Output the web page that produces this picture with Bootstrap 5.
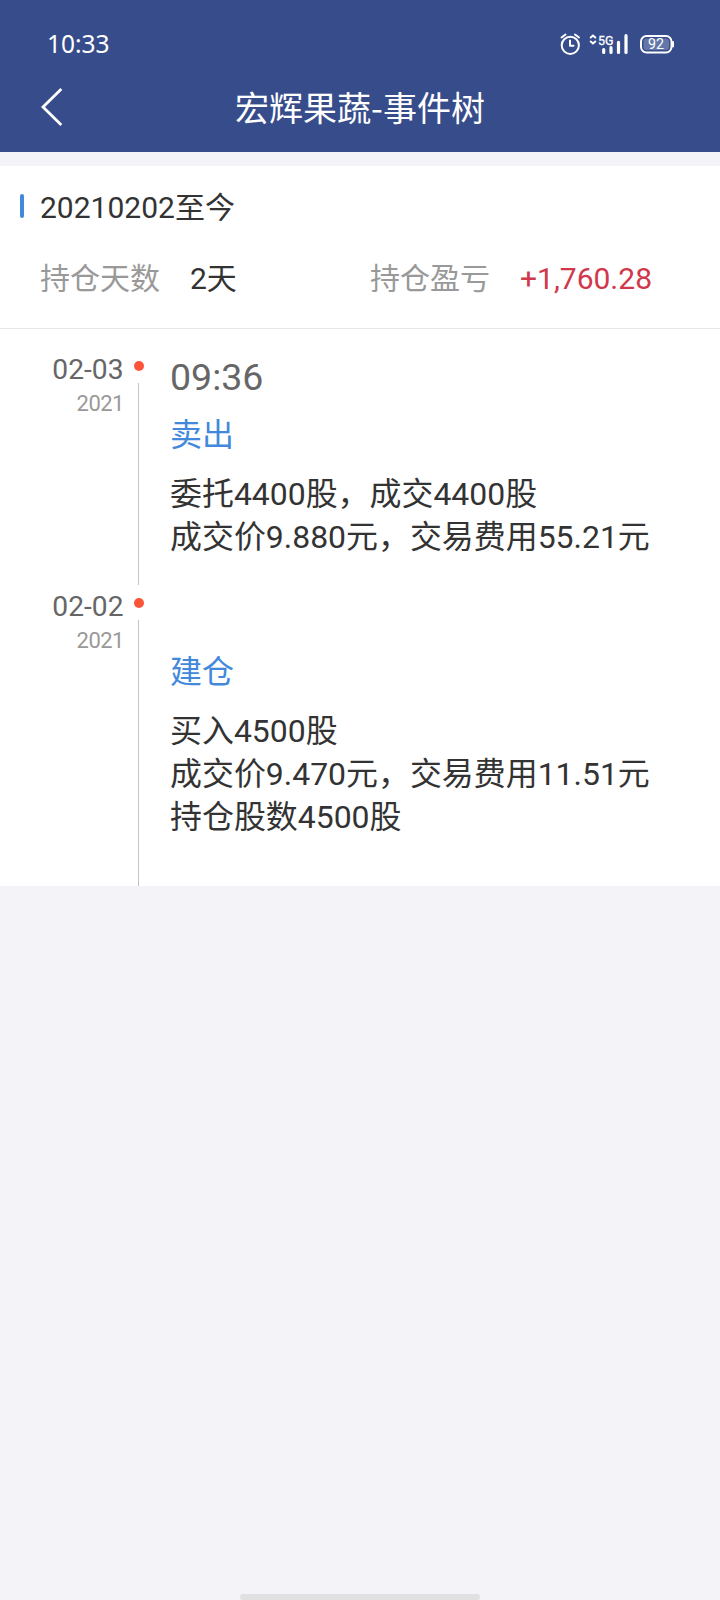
<!DOCTYPE html>
<html lang="zh-CN">
<head>
<meta charset="utf-8">
<meta name="viewport" content="width=device-width, initial-scale=1">
<title>宏辉果蔬-事件树</title>
<link href="https://cdn.jsdelivr.net/npm/bootstrap@5.3.0/dist/css/bootstrap.min.css" rel="stylesheet">
<style>
body{font-family:Roboto,"Noto Sans CJK SC",sans-serif;background:#f3f3f8;color:#333;min-height:1600px}
.app-head{background:#374d8b;color:#fff;height:152px}
.status-line{height:88px;padding:0 45px 0 47px}
.clock-text{font:24.5px/28px "Noto Sans",sans-serif}
.title-line{height:64px;padding-left:40px}
.page-title{font-family:"Noto Sans CJK SC",sans-serif;font-size:34px;line-height:48px;height:48px;margin-top:-5px;width:560px;margin-left:16px}
.sheet{margin-top:14px}
.summary{height:163px;padding-top:20px;border-bottom:1px solid #e6e6e6;font-size:30px}
.period{height:40px;line-height:40px}
.period-text{padding-top:4px}
.mark-bar{width:4px;height:24px;border-radius:2px;background:#4289dc;margin:0 16px 0 20px}
.stats{margin-top:32px;padding-left:40px;line-height:41px}
.days{margin-left:30px;width:180px}
.gain{margin-left:30px}
.label-c{color:#999}
.profit-c{color:#d0384b}
.timeline{padding-top:19px}
.event{height:237px}
.event-last{height:301px}
.date-col{width:123px;text-align:right}
.date-day{font-size:28.2px;line-height:34px;height:34px;color:#666;margin:5px -.5px 0 0}
.date-year{font-size:22px;line-height:28px;height:28px;color:#999;margin:3px -1px 0 0;letter-spacing:-.5px}
.axis-col{width:32px}
.dot{width:10px;height:10px;border-radius:50%;background:#fa5539;margin-top:13px}
.axis{width:1px;background:#c4c4c4;margin:12px 1px 0 0}
.body-col{padding-left:15px}
.time-text{font-size:37.5px;line-height:46px;height:46px;color:#666;margin-top:6px}
.action-text{font-size:32px;line-height:44px;height:44px;color:#4289dc;margin-top:13px}
.detail-text{font-size:31.95px;margin-top:16px}
.detail-text div{line-height:43px;height:43px;white-space:nowrap}
.home-bar{width:240px;height:6px;border-radius:3px;background:#e1e1e1}
</style>
<script src="https://cdn.jsdelivr.net/npm/bootstrap@5.3.0/dist/js/bootstrap.bundle.min.js"></script>
</head>
<body class="d-flex flex-column">
<header class="app-head">
  <div class="status-line d-flex align-items-center justify-content-between">
    <span class="clock-text">10:33</span>
    <svg width="116" height="28" viewBox="559 30 116 28" fill="none" stroke="#fff" stroke-linecap="round">
      <circle cx="570.3" cy="45.3" r="8.6" stroke-width="2"/>
      <path d="M570 40.5v5.2h3.5M561.5 37.5l4-3M579 37.5l-4-3" stroke-width="2" stroke-linejoin="round"/>
      <path d="M590.7 37.500l2.300-2 2.300 2M590.700 41.500l2.300 2 2.300-2" stroke-width="2"/>
      <text x="598" y="45" fill="#fff" stroke="#fff" stroke-width=".3" font-family="Roboto, sans-serif" font-size="13.5" textLength="15.500" lengthAdjust="spacingAndGlyphs">5G</text>
      <path d="M603.700 49.700v2.800M611 47.500v5M618.500 42.300v10.200M626 35.700v16.800" stroke-width="3.200"/>
      <rect x="641" y="36" width="30.500" height="16.500" rx="5.500" stroke-width="2"/>
      <rect x="643.500" y="38.500" width="25.500" height="11.500" rx="3" fill="#6477a9" stroke="none"/>
      <path d="M673 42v4.500" stroke-width="2"/>
      <text x="648" y="49.300" fill="#fff" stroke="none" font-family="Roboto, sans-serif" font-size="14.5" textLength="16" lengthAdjust="spacingAndGlyphs">92</text>
    </svg>
  </div>
  <div class="title-line d-flex">
    <svg width="24" height="40" viewBox="0 0 24 40" fill="none" stroke="#fff" stroke-width="2.800"><path d="M21.300 1L3 19l18.300 18"/></svg>
    <div class="page-title text-center">宏辉果蔬-事件树</div>
  </div>
</header>
<main class="sheet bg-white">
  <section class="summary">
    <div class="d-flex align-items-center period"><span class="mark-bar"></span><span class="period-text">20210202至今</span></div>
    <div class="d-flex stats">
      <span class="label-c">持仓天数</span><span class="days">2天</span>
      <span class="label-c">持仓盈亏</span><span class="profit-c gain">+1,760.28</span>
    </div>
  </section>
  <div class="timeline">
    <section class="event d-flex">
      <div class="date-col"><div class="date-day">02-03</div><div class="date-year">2021</div></div>
      <div class="axis-col d-flex flex-column align-items-center"><i class="dot"></i><i class="axis flex-grow-1"></i></div>
      <div class="body-col">
        <div class="time-text">09:36</div>
        <div class="action-text">卖出</div>
        <div class="detail-text"><div>委托4400股，成交4400股</div><div>成交价9.880元，交易费用55.21元</div></div>
      </div>
    </section>
    <section class="event event-last d-flex">
      <div class="date-col"><div class="date-day">02-02</div><div class="date-year">2021</div></div>
      <div class="axis-col d-flex flex-column align-items-center"><i class="dot"></i><i class="axis flex-grow-1"></i></div>
      <div class="body-col">
        <div class="time-text"></div>
        <div class="action-text">建仓</div>
        <div class="detail-text"><div>买入4500股</div><div>成交价9.470元，交易费用11.51元</div><div>持仓股数4500股</div></div>
      </div>
    </section>
  </div>
</main>
<div class="home-bar mt-auto mx-auto"></div>
</body>
</html>
